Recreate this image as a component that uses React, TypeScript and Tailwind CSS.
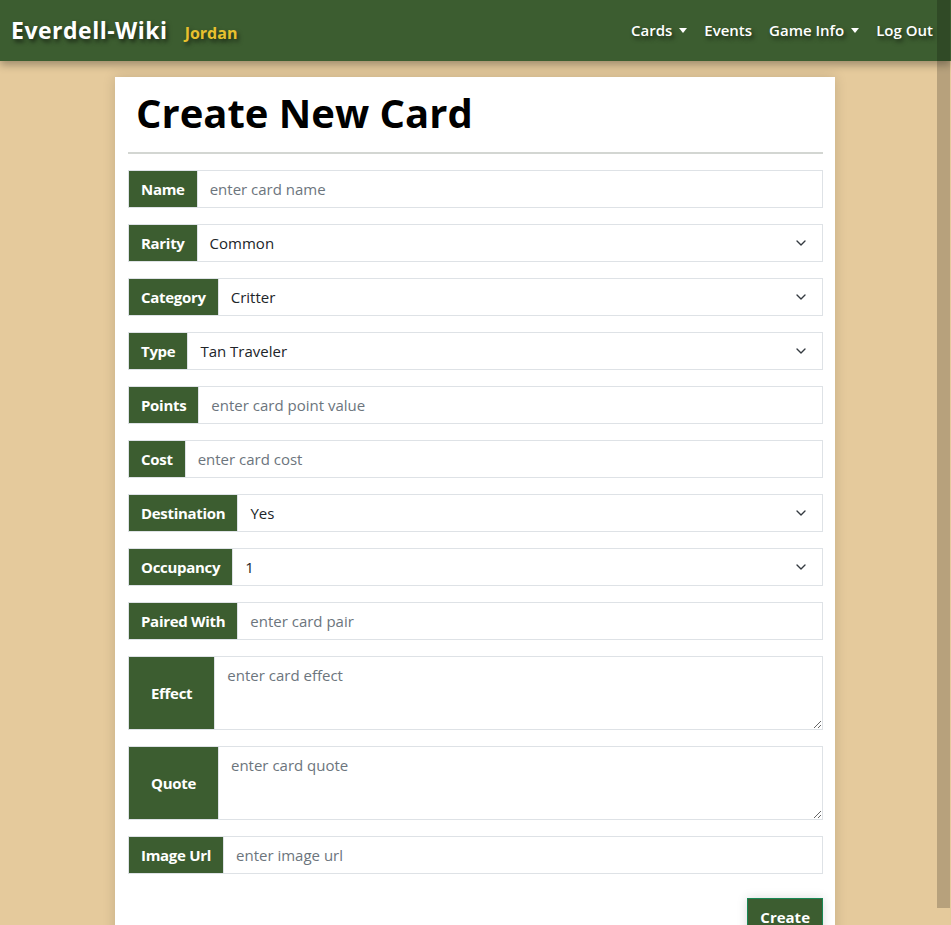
import { ChevronDown } from 'lucide-react';

const font = { fontFamily: '"Open Sans", "Noto Sans", sans-serif' };

type Field =
  | { label: string; kind: 'input'; placeholder: string }
  | { label: string; kind: 'select'; value: string }
  | { label: string; kind: 'textarea'; placeholder: string };

const fields: Field[] = [
  { label: 'Name', kind: 'input', placeholder: 'enter card name' },
  { label: 'Rarity', kind: 'select', value: 'Common' },
  { label: 'Category', kind: 'select', value: 'Critter' },
  { label: 'Type', kind: 'select', value: 'Tan Traveler' },
  { label: 'Points', kind: 'input', placeholder: 'enter card point value' },
  { label: 'Cost', kind: 'input', placeholder: 'enter card cost' },
  { label: 'Destination', kind: 'select', value: 'Yes' },
  { label: 'Occupancy', kind: 'select', value: '1' },
  { label: 'Paired With', kind: 'input', placeholder: 'enter card pair' },
  { label: 'Effect', kind: 'textarea', placeholder: 'enter card effect' },
  { label: 'Quote', kind: 'textarea', placeholder: 'enter card quote' },
  { label: 'Image Url', kind: 'input', placeholder: 'enter image url' },
];

function Caret() {
  return <span className="ml-[7px] inline-block h-0 w-0 border-x-[4.5px] border-t-[5px] border-x-transparent border-t-white" />;
}

function FieldRow({ field }: { field: Field }) {
  const tall = field.kind === 'textarea';
  return (
    <div className={`flex ${tall ? 'h-[74px]' : 'h-[38px]'}`}>
      <span
        className={`flex items-center border border-[#dee2e6] bg-[#3c5d30] text-[15px] font-bold tracking-[-0.3px] text-white ${
          tall ? 'px-[22px]' : 'px-3'
        }`}
      >
        {field.label}
      </span>
      {field.kind === 'input' && (
        <input
          placeholder={field.placeholder}
          className="min-w-0 flex-1 border border-l-0 border-[#dee2e6] bg-white px-3 text-[15px] text-[#212529] outline-none placeholder:text-[#6c757d]"
        />
      )}
      {field.kind === 'select' && (
        <div className="flex flex-1 items-center justify-between border border-l-0 border-[#dee2e6] bg-white pl-3 pr-[13px] text-[15px] text-[#212529]">
          <span>{field.value}</span>
          <ChevronDown size={16} strokeWidth={2} className="text-[#343a40]" />
        </div>
      )}
      {field.kind === 'textarea' && (
        <textarea
          placeholder={field.placeholder}
          className="min-w-0 flex-1 border border-l-0 border-[#dee2e6] bg-white px-3 py-[7px] text-[15px] text-[#212529] outline-none placeholder:text-[#6c757d]"
        />
      )}
    </div>
  );
}

export default function App() {
  return (
    <div className="relative h-[925px] overflow-hidden bg-[#e5ca9c]" style={font}>
      <nav className="relative z-10 flex h-[61px] items-center justify-between bg-[#3c5d30] pl-[11px] pr-[18px] shadow-[0_4px_8px_rgba(0,0,0,0.3)] [text-shadow:2px_3px_4px_rgba(0,0,0,0.55)]">
        <div className="flex items-baseline gap-[17px]">
          <span className="text-[23px] font-bold tracking-[0.5px] text-white">Everdell-Wiki</span>
          <span className="text-[16px] font-bold text-[#e8c02e]">Jordan</span>
        </div>
        <div className="flex items-center gap-[17px] text-[15px] font-semibold text-white">
          <span className="flex items-center">
            Cards
            <Caret />
          </span>
          <span>Events</span>
          <span className="flex items-center">
            Game Info
            <Caret />
          </span>
          <span>Log Out</span>
        </div>
      </nav>

      <main className="ml-[115px] mt-4 w-[720px] bg-white pb-10 pl-[13px] pr-[12px] pt-[12px] shadow-[0_0_12px_rgba(0,0,0,0.15)]">
        <h1 className="pl-2 text-[40px] leading-[1.2] font-bold text-black">Create New Card</h1>
        <hr className="mt-[15px] mb-[16px] border-t-2 border-[#d3d6d2]" />
        <form className="flex flex-col gap-4">
          {fields.map((f) => (
            <FieldRow key={f.label} field={f} />
          ))}
          <div className="mt-2 flex justify-end">
            <button
              type="button"
              className="h-[38px] border border-[#198754] bg-[#3c5d30] px-[12px] text-[15px] font-bold text-white shadow-[0_0_10px_rgba(0,0,0,0.15)]"
            >
              Create
            </button>
          </div>
        </form>
      </main>

      <div className="absolute right-[1px] top-0 z-20 h-[908px] w-[13px] bg-black/20" />
    </div>
  );
}
